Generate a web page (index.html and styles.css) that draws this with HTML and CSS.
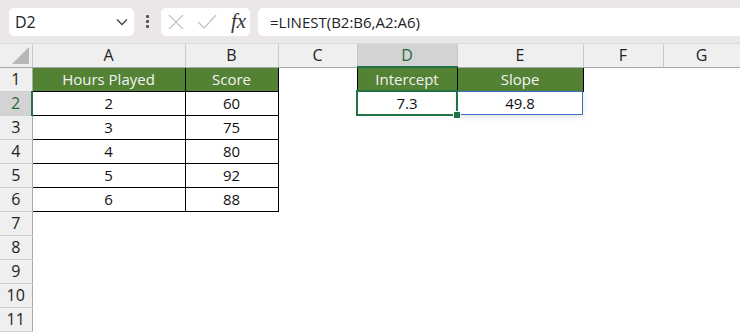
FILE: index.html
```html
<!DOCTYPE html>
<html lang="en">
<head>
  <meta charset="UTF-8" />
  <title>LINEST</title>
  <link rel="stylesheet" href="styles.css">
</head>
<body>
  <div class="toolbar">
    <div class="name-box">
      <span>D2</span>
      <svg class="chevron" width="12" height="8" viewBox="0 0 12 8"><path d="M1 1.5 L6 6.5 L11 1.5" fill="none" stroke="#444" stroke-width="1.3"/></svg>
    </div>
    <div class="dots"><i></i><i></i><i></i></div>
    <div class="fx-box">
      <svg width="16" height="16" viewBox="0 0 16 16"><path d="M1 1 L15 15 M15 1 L1 15" stroke="#c4c4c4" stroke-width="1.3" fill="none"/></svg>
      <svg width="20" height="16" viewBox="0 0 20 16"><path d="M1 8 L7 14 L19 1" stroke="#c4c4c4" stroke-width="1.3" fill="none"/></svg>
      <span class="fx">fx</span>
    </div>
    <div class="formula">=LINEST(B2:B6,A2:A6)</div>
  </div>

  <table class="sheet">
    <colgroup>
      <col class="w-row">
      <col class="w-a">
      <col class="w-b">
      <col class="w-c">
      <col class="w-d">
      <col class="w-e">
      <col class="w-f">
      <col class="w-g">
    </colgroup>
    <thead>
      <tr>
        <th class="corner"><span class="tri"></span></th>
        <th>A</th>
        <th>B</th>
        <th>C</th>
        <th class="sel-col">D</th>
        <th>E</th>
        <th>F</th>
        <th>G</th>
      </tr>
    </thead>
    <tbody>
      <tr>
        <th class="rh">1</th>
        <td class="head">Hours Played</td>
        <td class="head">Score</td>
        <td></td>
        <td class="head">Intercept</td>
        <td class="head">Slope</td>
        <td></td>
        <td></td>
      </tr>
      <tr>
        <th class="rh sel-row">2</th>
        <td class="box">2</td>
        <td class="box">60</td>
        <td></td>
        <td class="active">7.3<span class="handle"></span></td>
        <td class="spill">49.8</td>
        <td></td>
        <td></td>
      </tr>
      <tr><th class="rh">3</th><td class="box">3</td><td class="box">75</td><td></td><td></td><td></td><td></td><td></td></tr>
      <tr><th class="rh">4</th><td class="box">4</td><td class="box">80</td><td></td><td></td><td></td><td></td><td></td></tr>
      <tr><th class="rh">5</th><td class="box">5</td><td class="box">92</td><td></td><td></td><td></td><td></td><td></td></tr>
      <tr><th class="rh">6</th><td class="box">6</td><td class="box">88</td><td></td><td></td><td></td><td></td><td></td></tr>
      <tr><th class="rh">7</th><td></td><td></td><td></td><td></td><td></td><td></td><td></td></tr>
      <tr><th class="rh">8</th><td></td><td></td><td></td><td></td><td></td><td></td><td></td></tr>
      <tr><th class="rh">9</th><td></td><td></td><td></td><td></td><td></td><td></td><td></td></tr>
      <tr><th class="rh">10</th><td></td><td></td><td></td><td></td><td></td><td></td><td></td></tr>
      <tr><th class="rh">11</th><td></td><td></td><td></td><td></td><td></td><td></td><td></td></tr>
    </tbody>
  </table>
</body>
</html>
```

FILE: styles.css
```css
body {
  margin: 0;
  width: 740px;
  height: 335px;
  overflow: hidden;
  background: #fff;
  font-family: "Open Sans", "Noto Sans", sans-serif;
}
.toolbar {
  height: 44px;
  background: #ebe7e9;
  border-bottom: 1px solid #dcd8da;
  display: flex;
  align-items: center;
  padding: 0 0 0 9px;
  box-sizing: border-box;
}
.name-box {
  width: 125px;
  height: 28px;
  background: #fff;
  border-radius: 5px;
  display: flex;
  align-items: center;
  justify-content: space-between;
  padding: 0 6px 0 6px;
  box-sizing: border-box;
  font-size: 16px;
  color: #222;
}
.dots {
  width: 27px;
  display: flex;
  flex-direction: column;
  align-items: center;
  gap: 2px;
}
.dots i {
  width: 3px;
  height: 3px;
  background: #555;
  border-radius: 1px;
}
.fx-box {
  width: 89px;
  height: 28px;
  background: #fff;
  border-radius: 5px;
  display: flex;
  align-items: center;
  gap: 13px;
  padding-left: 7px;
  box-sizing: border-box;
}
.fx {
  font-family: "Liberation Serif", serif;
  font-style: italic;
  font-size: 21px;
  color: #333;
  margin-left: 1px;
}
.formula {
  flex: 1;
  height: 28px;
  margin-left: 8px;
  background: #fff;
  border-radius: 5px 0 0 5px;
  display: flex;
  align-items: center;
  padding-left: 12px;
  font-size: 15px;
  color: #222;
}

.sheet {
  border-collapse: collapse;
  table-layout: fixed;
  width: 740px;
  font-family: "Open Sans", "Noto Sans", sans-serif;
  font-size: 15px;
  color: #111;
}
.w-row { width: 32px; }
.w-a { width: 153px; }
.w-b { width: 93px; }
.w-c { width: 79px; }
.w-d { width: 100px; }
.w-e { width: 126px; }
.w-f { width: 80px; }
.w-g { width: 77px; }

.sheet th,
.sheet td {
  padding: 0;
  text-align: center;
  white-space: nowrap;
  line-height: 20px;
}
.sheet thead th {
  height: 22px;
  background: #efefef;
  font-weight: normal;
  border-right: 1px solid #c9c9c9;
  border-bottom: 1px solid #a9a9a9;
  color: #222;
  font-size: 16px;
}
.sheet thead th.sel-col {
  background: #d3d3d3;
  color: #1f6b3d;
  border-bottom: 2px solid #217346;
}
.corner {
  position: relative;
}
.tri {
  position: absolute;
  right: 3px;
  bottom: 3px;
  width: 0;
  height: 0;
  border-left: 17px solid transparent;
  border-bottom: 17px solid #b6b6b6;
}
.sheet tbody tr {
  height: 24px;
}
.rh {
  background: #efefef;
  font-weight: normal;
  border-right: 1px solid #a9a9a9;
  border-bottom: 1px solid #d0d0d0;
  color: #222;
  font-size: 16px;
}
.rh.sel-row {
  background: #d3d3d3;
  color: #1f6b3d;
  border-right: 2px solid #217346;
}
.head {
  background: #548235;
  color: #f3f3f3;
  border: 1px solid #000;
}
.box {
  border: 1px solid #000;
}
.active {
  position: relative;
  outline: 2px solid #217346;
  outline-offset: -1px;
  box-shadow: 0 2px 6px rgba(0, 0, 0, 0.12);
}
.spill {
  outline: 1px solid #3a6fc8;
  outline-offset: -1px;
  box-shadow: 0 2px 6px rgba(0, 0, 0, 0.12);
}
.handle {
  position: absolute;
  right: -4px;
  bottom: -4px;
  width: 6px;
  height: 6px;
  background: #217346;
  border: 1px solid #fff;
  z-index: 2;
}
```
